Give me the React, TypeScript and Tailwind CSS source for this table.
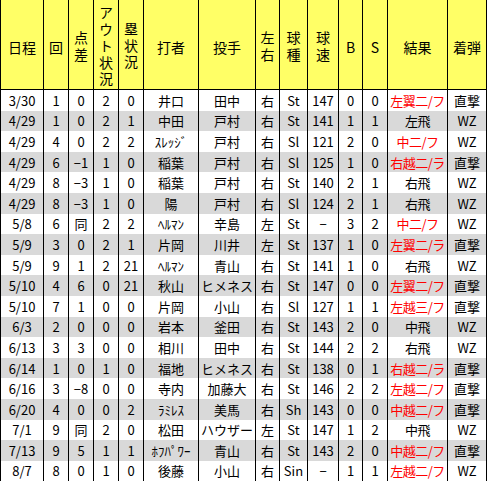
type Row = {
  date: string;
  inning: string;
  diff: string;
  outs: string;
  runners: string;
  batter: string;
  pitcher: string;
  hand: string;
  pitch: string;
  speed: string;
  b: string;
  s: string;
  result: string;
  red: boolean;
  spot: string;
};

const rows: Row[] = [
  { date: "3/30", inning: "1", diff: "0", outs: "2", runners: "0", batter: "井口", pitcher: "田中", hand: "右", pitch: "St", speed: "147", b: "0", s: "0", result: "左翼二/フ", red: true, spot: "直撃" },
  { date: "4/29", inning: "1", diff: "0", outs: "2", runners: "1", batter: "中田", pitcher: "戸村", hand: "右", pitch: "St", speed: "141", b: "1", s: "1", result: "左飛", red: false, spot: "WZ" },
  { date: "4/29", inning: "4", diff: "0", outs: "2", runners: "2", batter: "ｽﾚｯｼﾞ", pitcher: "戸村", hand: "右", pitch: "Sl", speed: "121", b: "2", s: "0", result: "中二/フ", red: true, spot: "WZ" },
  { date: "4/29", inning: "6", diff: "−1", outs: "1", runners: "0", batter: "稲葉", pitcher: "戸村", hand: "右", pitch: "Sl", speed: "125", b: "1", s: "0", result: "右越二/ラ", red: true, spot: "直撃" },
  { date: "4/29", inning: "8", diff: "−3", outs: "1", runners: "0", batter: "稲葉", pitcher: "戸村", hand: "右", pitch: "St", speed: "140", b: "2", s: "1", result: "右飛", red: false, spot: "WZ" },
  { date: "4/29", inning: "8", diff: "−3", outs: "1", runners: "0", batter: "陽", pitcher: "戸村", hand: "右", pitch: "Sl", speed: "124", b: "2", s: "1", result: "右飛", red: false, spot: "WZ" },
  { date: "5/8", inning: "6", diff: "同", outs: "2", runners: "2", batter: "ﾍﾙﾏﾝ", pitcher: "辛島", hand: "左", pitch: "St", speed: "−", b: "3", s: "2", result: "中二/フ", red: true, spot: "WZ" },
  { date: "5/9", inning: "3", diff: "0", outs: "2", runners: "1", batter: "片岡", pitcher: "川井", hand: "左", pitch: "St", speed: "137", b: "1", s: "0", result: "左翼二/ラ", red: true, spot: "直撃" },
  { date: "5/9", inning: "9", diff: "1", outs: "2", runners: "21", batter: "ﾍﾙﾏﾝ", pitcher: "青山", hand: "右", pitch: "St", speed: "141", b: "1", s: "0", result: "右飛", red: false, spot: "WZ" },
  { date: "5/10", inning: "4", diff: "6", outs: "0", runners: "21", batter: "秋山", pitcher: "ヒメネス", hand: "右", pitch: "St", speed: "147", b: "0", s: "0", result: "左翼二/フ", red: true, spot: "直撃" },
  { date: "5/10", inning: "7", diff: "1", outs: "0", runners: "0", batter: "片岡", pitcher: "小山", hand: "右", pitch: "Sl", speed: "127", b: "1", s: "1", result: "左越三/フ", red: true, spot: "直撃" },
  { date: "6/3", inning: "2", diff: "0", outs: "0", runners: "0", batter: "岩本", pitcher: "釜田", hand: "右", pitch: "St", speed: "143", b: "2", s: "0", result: "中飛", red: false, spot: "WZ" },
  { date: "6/13", inning: "3", diff: "3", outs: "0", runners: "0", batter: "相川", pitcher: "田中", hand: "右", pitch: "St", speed: "144", b: "2", s: "2", result: "右飛", red: false, spot: "WZ" },
  { date: "6/14", inning: "1", diff: "0", outs: "1", runners: "0", batter: "福地", pitcher: "ヒメネス", hand: "右", pitch: "St", speed: "138", b: "0", s: "1", result: "右越二/ラ", red: true, spot: "直撃" },
  { date: "6/16", inning: "3", diff: "−8", outs: "0", runners: "0", batter: "寺内", pitcher: "加藤大", hand: "右", pitch: "St", speed: "146", b: "2", s: "2", result: "左越二/フ", red: true, spot: "直撃" },
  { date: "6/20", inning: "4", diff: "0", outs: "0", runners: "2", batter: "ﾗﾐﾚｽ", pitcher: "美馬", hand: "右", pitch: "Sh", speed: "143", b: "0", s: "0", result: "中越二/フ", red: true, spot: "直撃" },
  { date: "7/1", inning: "9", diff: "同", outs: "2", runners: "0", batter: "松田", pitcher: "ハウザー", hand: "左", pitch: "St", speed: "147", b: "1", s: "2", result: "中飛", red: false, spot: "WZ" },
  { date: "7/13", inning: "9", diff: "5", outs: "1", runners: "1", batter: "ﾎﾌﾊﾟﾜｰ", pitcher: "青山", hand: "右", pitch: "St", speed: "143", b: "2", s: "0", result: "中越二/フ", red: true, spot: "直撃" },
  { date: "8/7", inning: "8", diff: "0", outs: "1", runners: "0", batter: "後藤", pitcher: "小山", hand: "右", pitch: "Sin", speed: "−", b: "1", s: "1", result: "左越二/フ", red: true, spot: "WZ" },
];

// fixed column widths, each width includes the 1px left rule
const grid =
  "grid grid-cols-[43px_25px_25px_25px_25px_55px_57px_24px_28px_31px_24px_25px_60px_39px] border-r border-black";

const cell = "border-l border-black flex items-center justify-center overflow-hidden whitespace-nowrap";

// narrow header cells stack their characters top to bottom, like Excel wrapping
const Stack = ({ text }: { text: string }) => (
  <span className="[writing-mode:vertical-rl] [text-orientation:upright] tracking-[2.5px] leading-none">
    {text}
  </span>
);

const App = () => {
  return (
    <div className="w-[490px] h-[482px] bg-white overflow-hidden font-['Noto_Sans_CJK_JP',sans-serif] text-black">
      <div className="w-[487px]">
        {/* header */}
        <div className={`${grid} h-[90px] bg-[#ffff66] border-b border-black text-[14px] [&>div]:pt-[5px]`}>
          <div className={cell}>日程</div>
          <div className={cell}>回</div>
          <div className={cell}>
            <Stack text="点差" />
          </div>
          <div className={cell}>
            <Stack text="アウト状況" />
          </div>
          <div className={cell}>
            <Stack text="塁状況" />
          </div>
          <div className={cell}>打者</div>
          <div className={cell}>投手</div>
          <div className={cell}>
            <Stack text="左右" />
          </div>
          <div className={cell}>
            <Stack text="球種" />
          </div>
          <div className={cell}>
            <Stack text="球速" />
          </div>
          <div className={cell}>B</div>
          <div className={cell}>S</div>
          <div className={cell}>結果</div>
          <div className={cell}>着弾</div>
        </div>

        {/* body */}
        {rows.map((r, i) => (
          <div
            key={i}
            className={`${grid} h-[20.6px] text-[13px] leading-none ${i % 2 === 1 ? "bg-[#d9d9d9]" : "bg-white"}`}
          >
            <div className={cell}>{r.date}</div>
            <div className={cell}>{r.inning}</div>
            <div className={cell}>{r.diff}</div>
            <div className={cell}>{r.outs}</div>
            <div className={cell}>{r.runners}</div>
            <div className={cell}>{r.batter}</div>
            <div className={cell}>{r.pitcher}</div>
            <div className={cell}>{r.hand}</div>
            <div className={cell}>{r.pitch}</div>
            <div className={cell}>{r.speed}</div>
            <div className={cell}>{r.b}</div>
            <div className={cell}>{r.s}</div>
            <div className={`${cell} tracking-[-0.5px] ${r.red ? "text-[#ff0000]" : ""}`}>{r.result}</div>
            <div className={cell}>{r.spot}</div>
          </div>
        ))}
      </div>
    </div>
  );
};

export default App;
